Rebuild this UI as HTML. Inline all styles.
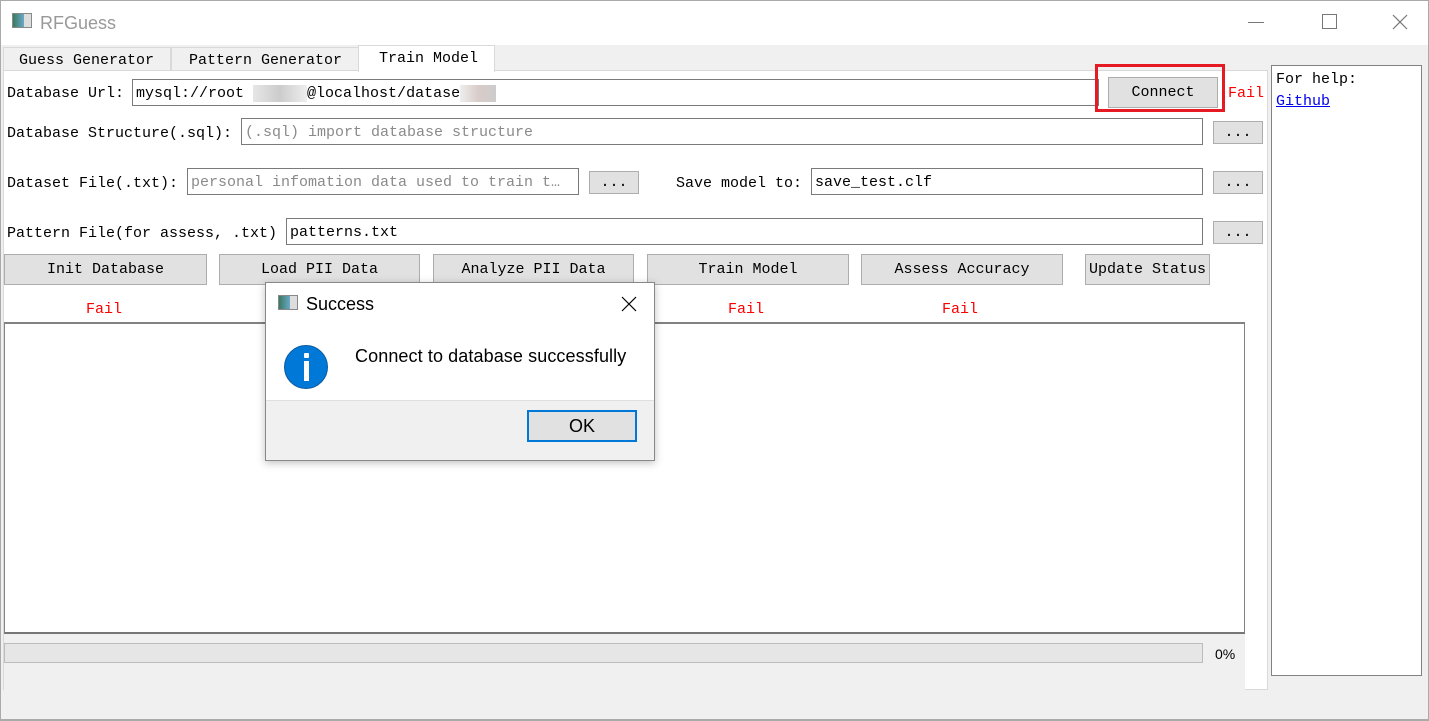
<!DOCTYPE html>
<html><head><style>
*{box-sizing:border-box;margin:0;padding:0}
body{width:1429px;height:721px;background:#f0f0f0;position:relative;overflow:hidden;font-family:"Liberation Mono","Noto Sans CJK SC",monospace;font-size:15px;color:#000}
.a{position:absolute}
.lbl{position:absolute;white-space:nowrap;line-height:18px}
.in{position:absolute;background:#fff;border:1px solid #7a7a7a;height:27px;padding:5px 3px;line-height:18px;white-space:nowrap;overflow:hidden}
.ph{color:#8a8a8a}
.btn{position:absolute;background:#e1e1e1;border:1px solid #adadad;text-align:center;line-height:30px;white-space:nowrap}
.red{color:#f00}
.s{font-family:"Liberation Sans",sans-serif}
</style></head><body>
<div class="a" style="left:0;top:0;width:1429px;height:45px;background:#fff;border:1px solid #aaa;border-bottom:none"></div>
<div class="a" style="left:12px;top:13px;width:20px;height:15px;border:1px solid #888;background:linear-gradient(90deg,#3a7a60 0,#6aa8c8 60%,#ddd 60%)"></div>
<div class="lbl s" style="left:40px;top:12px;font-size:18px;line-height:22px;color:#999">RFGuess</div>
<div class="a" style="left:1248px;top:22px;width:16px;height:1px;background:#777"></div>
<div class="a" style="left:1322px;top:14px;width:15px;height:15px;border:1px solid #777"></div>
<svg class="a" style="left:1392px;top:14px" width="16" height="16"><path d="M1 1L15 15M15 1L1 15" stroke="#777" stroke-width="1.2"/></svg>
<div class="a" style="left:0;top:45px;width:1px;height:676px;background:#aaa"></div>
<div class="a" style="left:1428px;top:45px;width:1px;height:676px;background:#aaa"></div>
<div class="a" style="left:0;top:719px;width:1429px;height:2px;background:#aaa"></div>
<!-- tabs -->
<div class="a" style="left:3px;top:47px;width:168px;height:24px;border:1px solid #d9d9d9;background:#f0f0f0"></div>
<div class="lbl" style="left:19px;top:52px">Guess Generator</div>
<div class="a" style="left:171px;top:47px;width:188px;height:24px;border:1px solid #d9d9d9;background:#f0f0f0"></div>
<div class="lbl" style="left:189px;top:52px">Pattern Generator</div>
<!-- pane -->
<div class="a" style="left:3px;top:70px;width:1265px;height:620px;background:#fff;border:1px solid #d9d9d9"></div>
<div class="a" style="left:358px;top:45px;width:137px;height:27px;background:#fff;border:1px solid #d9d9d9;border-bottom:none"></div>
<div class="lbl" style="left:379px;top:50px">Train Model</div>
<!-- row1 -->
<div class="lbl" style="left:7px;top:85px">Database Url:</div>
<div class="in" style="left:132px;top:79px;width:967px">mysql://root <span style="background:linear-gradient(90deg,#e6e6e6,#ccc,#eee);color:transparent">xxxxxx</span>@localhost/datase<span style="background:linear-gradient(90deg,#eee,#d9ccc8,#ccc);color:transparent">xxxx</span></div>
<div class="a" style="left:1095px;top:64px;width:130px;height:48px;border:3px solid #e51a23"></div>
<div class="btn" style="left:1108px;top:77px;width:110px;height:31px">Connect</div>
<div class="lbl red" style="left:1228px;top:85px">Fail</div>
<!-- row2 -->
<div class="lbl" style="left:7px;top:125px">Database Structure(.sql):</div>
<div class="in ph" style="left:241px;top:118px;width:962px">(.sql) import database structure</div>
<div class="btn" style="left:1213px;top:121px;width:50px;height:23px;line-height:22px">...</div>
<!-- row3 -->
<div class="lbl" style="left:7px;top:175px">Dataset File(.txt):</div>
<div class="in ph" style="left:187px;top:168px;width:392px">personal infomation data used to train t…</div>
<div class="btn" style="left:589px;top:171px;width:50px;height:23px;line-height:22px">...</div>
<div class="lbl" style="left:676px;top:175px">Save model to:</div>
<div class="in" style="left:811px;top:168px;width:392px">save_test.clf</div>
<div class="btn" style="left:1213px;top:171px;width:50px;height:23px;line-height:22px">...</div>
<!-- row4 -->
<div class="lbl" style="left:7px;top:225px">Pattern File(for assess, .txt)</div>
<div class="in" style="left:286px;top:218px;width:917px">patterns.txt</div>
<div class="btn" style="left:1213px;top:221px;width:50px;height:23px;line-height:22px">...</div>
<!-- buttons -->
<div class="btn" style="left:4px;top:254px;width:203px;height:31px">Init Database</div>
<div class="btn" style="left:219px;top:254px;width:201px;height:31px">Load PII Data</div>
<div class="btn" style="left:433px;top:254px;width:201px;height:31px">Analyze PII Data</div>
<div class="btn" style="left:647px;top:254px;width:202px;height:31px">Train Model</div>
<div class="btn" style="left:861px;top:254px;width:202px;height:31px">Assess Accuracy</div>
<div class="btn" style="left:1085px;top:254px;width:125px;height:31px">Update Status</div>
<div class="lbl red" style="left:86px;top:301px">Fail</div>
<div class="lbl red" style="left:728px;top:301px">Fail</div>
<div class="lbl red" style="left:942px;top:301px">Fail</div>
<!-- text area -->
<div class="a" style="left:4px;top:322px;width:1241px;height:312px;background:#fff;border:1px solid #828282;border-top:2px solid #828282;border-bottom:2px solid #777"></div>
<div class="a" style="left:4px;top:634px;width:1241px;height:56px;background:#f0f0f0"></div>
<div class="a" style="left:4px;top:643px;width:1199px;height:20px;background:#e6e6e6;border:1px solid #bcbcbc"></div>
<div class="lbl s" style="left:1215px;top:645px;font-size:14px">0%</div>
<!-- help -->
<div class="a" style="left:1271px;top:65px;width:151px;height:611px;background:#fff;border:1px solid #828282"></div>
<div class="lbl" style="left:1276px;top:71px">For help:</div>
<div class="lbl" style="left:1276px;top:93px;color:#00e;text-decoration:underline">Github</div>
<!-- dialog -->
<div class="a" style="left:265px;top:282px;width:390px;height:179px;background:#fff;border:1px solid #888;box-shadow:0 2px 8px rgba(0,0,0,.25)"></div>
<div class="a" style="left:278px;top:295px;width:20px;height:15px;border:1px solid #888;background:linear-gradient(90deg,#3a7a60 0,#6aa8c8 60%,#ddd 60%)"></div>
<div class="lbl s" style="left:306px;top:293px;font-size:18px;line-height:22px">Success</div>
<svg class="a" style="left:621px;top:296px" width="16" height="16"><path d="M1 1L15 15M15 1L1 15" stroke="#000" stroke-width="1.2"/></svg>
<div class="a" style="left:284px;top:345px;width:44px;height:44px;border-radius:50%;background:#0078d7;border:1px solid #0a5aa0"></div>
<div class="a" style="left:304px;top:353px;width:5px;height:5px;background:#fff;border-radius:1px"></div>
<div class="a" style="left:304px;top:361px;width:5px;height:20px;background:#fff"></div>
<div class="lbl s" style="left:355px;top:345px;font-size:18px;line-height:22px;letter-spacing:0.1px">Connect to database successfully</div>
<div class="a" style="left:266px;top:400px;width:388px;height:60px;background:#f0f0f0;border-top:1px solid #dfdfdf"></div>
<div class="btn s" style="left:527px;top:410px;width:110px;height:32px;border:2px solid #0078d7;font-size:18px;line-height:28px">OK</div>
</body></html>
